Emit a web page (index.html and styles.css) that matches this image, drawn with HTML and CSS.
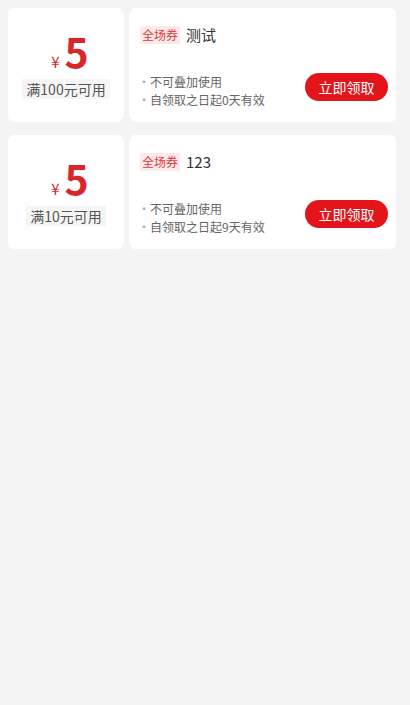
FILE: index.html
```html
<!DOCTYPE html>
<html lang="zh-CN">
<head>
  <meta charset="UTF-8" />
  <meta name="viewport" content="width=device-width, initial-scale=1.0"/>
  <title>领券中心</title>
  <link rel="stylesheet" href="styles.css">
</head>
<body>
  <div class="coupon-list">
    <div class="coupon">
      <div class="coupon-left">
        <div class="price"><span class="yen">¥</span><span class="amount">5</span></div>
        <div class="condition">满100元可用</div>
      </div>
      <div class="coupon-right">
        <div class="title"><span class="tag">全场券</span><span class="name">测试</span></div>
        <div class="bottom">
          <ul class="rules">
            <li>不可叠加使用</li>
            <li>自领取之日起0天有效</li>
          </ul>
          <button type="button" class="get-btn">立即领取</button>
        </div>
      </div>
    </div>

    <div class="coupon">
      <div class="coupon-left">
        <div class="price"><span class="yen">¥</span><span class="amount">5</span></div>
        <div class="condition">满10元可用</div>
      </div>
      <div class="coupon-right">
        <div class="title"><span class="tag">全场券</span><span class="name">123</span></div>
        <div class="bottom">
          <ul class="rules">
            <li>不可叠加使用</li>
            <li>自领取之日起9天有效</li>
          </ul>
          <button type="button" class="get-btn">立即领取</button>
        </div>
      </div>
    </div>
  </div>
</body>
</html>
```

FILE: styles.css
```css
* {
  box-sizing: border-box;
  margin: 0;
  padding: 0;
  font-family: 'Noto Sans CJK SC', 'Microsoft YaHei', sans-serif;
}

body {
  background-color: #f4f4f4;
  color: #333;
}

.coupon-list {
  padding: 8px 14px 8px 8px;
  display: flex;
  flex-direction: column;
  gap: 13px;
}

.coupon {
  position: relative;
  display: flex;
  gap: 5px;
  height: 114px;
}

/* notches between the two halves */
.coupon::before,
.coupon::after {
  content: "";
  position: absolute;
  left: 113px;
  width: 11px;
  height: 11px;
  border-radius: 50%;
  background-color: #f4f4f4;
}

.coupon::before {
  top: -5px;
}

.coupon::after {
  bottom: -5px;
}

.coupon-left {
  width: 116px;
  background-color: #fff;
  border-radius: 6px;
  display: flex;
  flex-direction: column;
  align-items: center;
  padding-top: 19px;
}

.price {
  color: #d9262b;
  display: flex;
  align-items: baseline;
  height: 47px;
  margin-left: 8px;
}

.yen {
  font-size: 15px;
  margin-right: 5px;
}

.amount {
  font-size: 41px;
  font-weight: 700;
  line-height: 47px;
}

.condition {
  margin-top: 5px;
  background-color: #f5f5f5;
  color: #555;
  font-size: 14px;
  line-height: 20px;
  padding: 0 4px;
}

.coupon-right {
  flex: 1;
  background-color: #fff;
  border-radius: 6px;
  padding: 16px 8px 13px 11px;
  display: flex;
  flex-direction: column;
  justify-content: space-between;
}

.title {
  display: flex;
  align-items: center;
  gap: 6px;
}

.tag {
  background-color: #fde9e9;
  color: #e0393c;
  font-size: 12px;
  line-height: 18px;
  padding: 0 2px;
  border-radius: 2px;
}

.name {
  font-size: 15px;
  color: #333;
}

.bottom {
  display: flex;
  align-items: flex-start;
  justify-content: space-between;
}

.rules {
  list-style: none;
  font-size: 12px;
  color: #666;
  line-height: 18px;
  margin-left: -2px;
}

.rules li::before {
  content: "•";
  color: #aaa;
}

.get-btn {
  background-color: #e4141b;
  color: #fff;
  border: none;
  border-radius: 14px;
  height: 28px;
  width: 83px;
  font-size: 14px;
  cursor: pointer;
}
```
